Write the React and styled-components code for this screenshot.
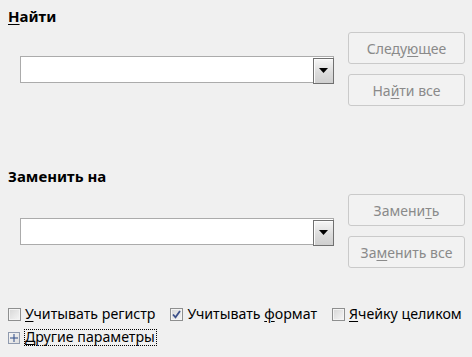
import React from 'react';
import styled, { createGlobalStyle } from 'styled-components';

const GlobalStyle = createGlobalStyle`
  html, body {
    margin: 0;
    padding: 0;
    background: #f0f0f0;
  }
  body {
    font-family: "Noto Sans", "Open Sans", sans-serif;
    color: #000;
  }
`;

const Dialog = styled.div`
  width: 472px;
  height: 357px;
  box-sizing: border-box;
  padding: 0 7px 0 8px;
  background: #f0f0f0;
  display: flex;
  flex-direction: column;
`;

const Heading = styled.div`
  font-size: 15px;
  font-weight: bold;
  line-height: 20px;
  margin-top: ${props => props.$top}px;
`;

const Mn = styled.span`
  text-decoration: underline;
  text-underline-offset: 2px;
`;

const Row = styled.div`
  display: flex;
  align-items: center;
  margin-top: ${props => props.$top}px;
  padding-left: 12px;
`;

const Combo = styled.div`
  width: 314px;
  height: 27px;
  box-sizing: border-box;
  border: 1px solid #ababab;
  background: #fff;
  display: flex;
  justify-content: flex-end;
  padding: 1px 0 0 0;
`;

const DropButton = styled.div`
  width: 21px;
  height: 26px;
  box-sizing: border-box;
  border: 1px solid #707070;
  margin-right: -1px;
  margin-bottom: -1px;
  background: linear-gradient(#f6f6f6, #dcdcdc 55%, #cfcfcf);
  box-shadow: inset 1px 1px 0 #fcfcfc;
  display: flex;
  align-items: center;
  justify-content: center;
`;

const Buttons = styled.div`
  display: flex;
  flex-direction: column;
  gap: 10px;
  margin-left: 14px;
`;

const Button = styled.div`
  width: 117px;
  height: 32px;
  box-sizing: border-box;
  border: 1px solid #cacaca;
  border-radius: 3px;
  background: #f2f2f2;
  color: #8a8a8a;
  font-size: 14px;
  display: flex;
  align-items: center;
  justify-content: center;
`;

const Options = styled.div`
  display: flex;
  align-items: center;
  gap: 15px;
  margin-top: ${props => props.$top}px;
  font-size: 14.2px;
  line-height: 18px;
  white-space: nowrap;
`;

const Option = styled.label`
  display: flex;
  align-items: center;
  gap: 4px;
  flex-shrink: 0;
`;

const Box = styled.span`
  width: 13px;
  height: 13px;
  box-sizing: border-box;
  border: 1px solid #8e8f8f;
  background: linear-gradient(135deg, #d6d6d6, #f6f6f6);
  box-shadow: inset 0 0 0 1px #f4f4f4;
  display: flex;
  align-items: center;
  justify-content: center;
`;

const Expander = styled.div`
  display: flex;
  align-items: center;
  gap: 4px;
  margin-top: ${props => props.$top}px;
  font-size: 14.2px;
  line-height: 14px;
  white-space: nowrap;
`;

const PlusBox = styled.span`
  width: 12px;
  height: 12px;
  box-sizing: border-box;
  border: 1px solid #8f9aae;
  background: linear-gradient(135deg, #f4f4f4, #e0e0e0);
  display: flex;
  align-items: center;
  justify-content: center;
`;

const FocusLabel = styled.span`
  border: 1px dotted #000;
  padding: 0 1px 1px 0;
`;

function Arrow() {
  return (
    <svg width="9" height="5" viewBox="0 0 9 5">
      <path d="M0 0h9L4.5 5z" fill="#000" />
    </svg>
  );
}

function Check() {
  return (
    <svg width="9" height="9" viewBox="0 0 9 9">
      <path d="M1 4.5l2.5 2.8L8 1" fill="none" stroke="#3c5089" strokeWidth="1.8" />
    </svg>
  );
}

function Plus() {
  return (
    <svg width="8" height="8" viewBox="0 0 8 8">
      <path d="M0 4h8M4 0v8" stroke="#2c4a86" strokeWidth="1" />
    </svg>
  );
}

function ComboBox() {
  return (
    <Combo>
      <DropButton><Arrow /></DropButton>
    </Combo>
  );
}

export default function App() {
  return (
    <Dialog>
      <GlobalStyle />
      <Heading $top={6}><Mn>Н</Mn>айти</Heading>
      <Row $top={6}>
        <ComboBox />
        <Buttons>
          <Button>Следу<Mn>ю</Mn>щее</Button>
          <Button>На<Mn>й</Mn>ти все</Button>
        </Buttons>
      </Row>
      <Heading $top={60}>Заменить на</Heading>
      <Row $top={8}>
        <ComboBox />
        <Buttons>
          <Button>Замени<Mn>т</Mn>ь</Button>
          <Button>За<Mn>м</Mn>енить все</Button>
        </Buttons>
      </Row>
      <Options $top={37}>
        <Option><Box /><span><Mn>У</Mn>читывать регистр</span></Option>
        <Option><Box><Check /></Box><span>Учитывать <Mn>ф</Mn>ормат</span></Option>
        <Option><Box /><span><Mn>Я</Mn>чейку целиком</span></Option>
      </Options>
      <Expander $top={6}>
        <PlusBox><Plus /></PlusBox>
        <FocusLabel><Mn>Д</Mn>ругие параметры</FocusLabel>
      </Expander>
    </Dialog>
  );
}
